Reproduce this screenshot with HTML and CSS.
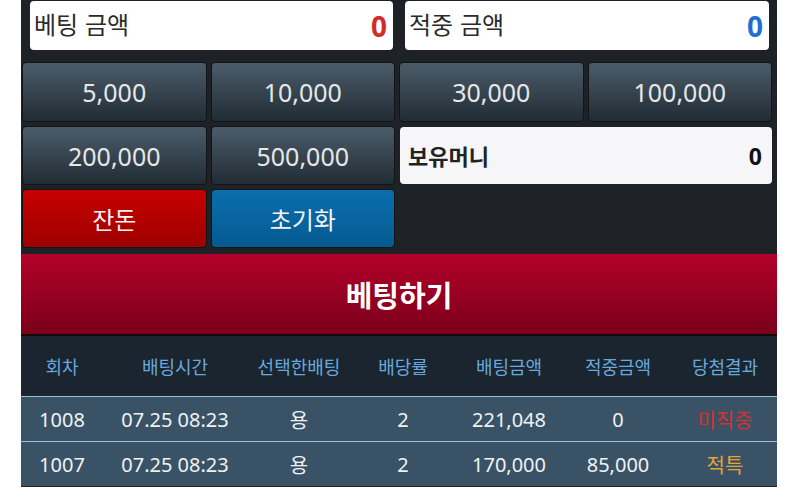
FILE: index.html
```html
<!DOCTYPE html>
<html lang="ko">
<head>
<meta charset="utf-8">
<link rel="stylesheet" href="styles.css">
</head>
<body>
<div class="panel">
  <div class="top">
    <div class="field"><span class="label">베팅 금액</span><span class="val red">0</span></div>
    <div class="field"><span class="label">적중 금액</span><span class="val blue">0</span></div>
  </div>
  <div class="pad">
    <div class="btn">5,000</div>
    <div class="btn">10,000</div>
    <div class="btn">30,000</div>
    <div class="btn">100,000</div>
    <div class="btn">200,000</div>
    <div class="btn">500,000</div>
    <div class="money"><span class="mlabel">보유머니</span><span class="mval">0</span></div>
    <div class="btn btn-red">잔돈</div>
    <div class="btn btn-blue">초기화</div>
  </div>
  <div class="bet">베팅하기</div>
  <div class="table">
    <div class="row head">
      <div>회차</div><div>배팅시간</div><div>선택한배팅</div><div>배당률</div><div>배팅금액</div><div>적중금액</div><div>당첨결과</div>
    </div>
    <div class="row body">
      <div>1008</div><div>07.25 08:23</div><div>용</div><div>2</div><div>221,048</div><div>0</div><div class="lose">미직중</div>
    </div>
    <div class="row body">
      <div>1007</div><div>07.25 08:23</div><div>용</div><div>2</div><div>170,000</div><div>85,000</div><div class="tie">적특</div>
    </div>
  </div>
</div>
</body>
</html>
```

FILE: styles.css
```css
html, body {
  margin: 0;
  padding: 0;
  background: #ffffff;
  height: 487px;
  overflow: hidden;
}
body {
  font-family: "Noto Sans", "Noto Sans CJK KR", sans-serif;
}
.panel {
  margin-left: 21px;
  width: 756px;
  height: 487px;
  background: #1e2227;
}
.top {
  display: grid;
  grid-template-columns: 363px 364px;
  column-gap: 12px;
  padding: 1px 0 0 9px;
}
.field {
  height: 49px;
  background: #ffffff;
  border-radius: 4px;
  display: flex;
  align-items: center;
  justify-content: space-between;
  padding: 0 6px 0 4px;
  box-sizing: border-box;
}
.label {
  font-family: "Noto Sans CJK KR", sans-serif;
  font-size: 24px;
  color: #2a2a2a;
  margin-top: -4px;
}
.val {
  font-size: 28px;
  font-weight: 700;
}
.red { color: #d62a2a; }
.blue { color: #1f6fd0; }
.pad {
  margin-top: 12px;
  padding-left: 1px;
  display: grid;
  grid-template-columns: repeat(4, 184.5px);
  grid-template-rows: 60px 59px 59px;
  gap: 4px;
}
.btn {
  border: 1px solid #111518;
  border-radius: 4px;
  background: linear-gradient(#4b5c69, #212c34);
  color: #e4e7ea;
  font-size: 25px;
  display: flex;
  align-items: center;
  justify-content: center;
  box-sizing: border-box;
}
.btn-red {
  background: linear-gradient(#c80000, #9e0000);
  color: #f5f0f0;
  font-family: "Noto Sans CJK KR", sans-serif;
  font-size: 24px;
}
.btn-blue {
  background: linear-gradient(#0c6eae, #055a90);
  color: #f0f4f8;
  font-family: "Noto Sans CJK KR", sans-serif;
  font-size: 24px;
}
.money {
  grid-column: 3 / 5;
  margin: 1px 0 1px 1px;
  background: #f6f6f8;
  border-radius: 4px;
  display: flex;
  align-items: center;
  justify-content: space-between;
  padding: 0 10px 0 8px;
}
.mlabel {
  font-family: "Noto Sans CJK KR", sans-serif;
  font-weight: 700;
  font-size: 22px;
  color: #222;
  margin-top: -2px;
}
.mval {
  font-weight: 700;
  font-size: 23px;
  color: #111;
}
.bet {
  margin-top: 6px;
  height: 82px;
  box-sizing: border-box;
  border-bottom: 2px solid #14080a;
  background: linear-gradient(#b3012b, #7a0019);
  color: #ffffff;
  font-family: "Noto Sans CJK KR", sans-serif;
  font-weight: 700;
  font-size: 29px;
  display: flex;
  align-items: center;
  justify-content: center;
}
.row {
  display: grid;
  grid-template-columns: 82px 144px 104px 104px 108px 110px 104px;
  align-items: center;
  text-align: center;
}
.head {
  height: 60px;
  background: #1b2530;
  color: #67a9de;
  font-family: "Noto Sans CJK KR", sans-serif;
  font-size: 18px;
}
.body {
  height: 45px;
  box-sizing: border-box;
  border-top: 1px solid #9bbfd6;
  background: #3a5266;
  color: #eef2f5;
  font-size: 20px;
}
.lose {
  color: #d7312e;
  font-family: "Noto Sans CJK KR", sans-serif;
}
.tie {
  color: #e3a23a;
  font-family: "Noto Sans CJK KR", sans-serif;
}
```
